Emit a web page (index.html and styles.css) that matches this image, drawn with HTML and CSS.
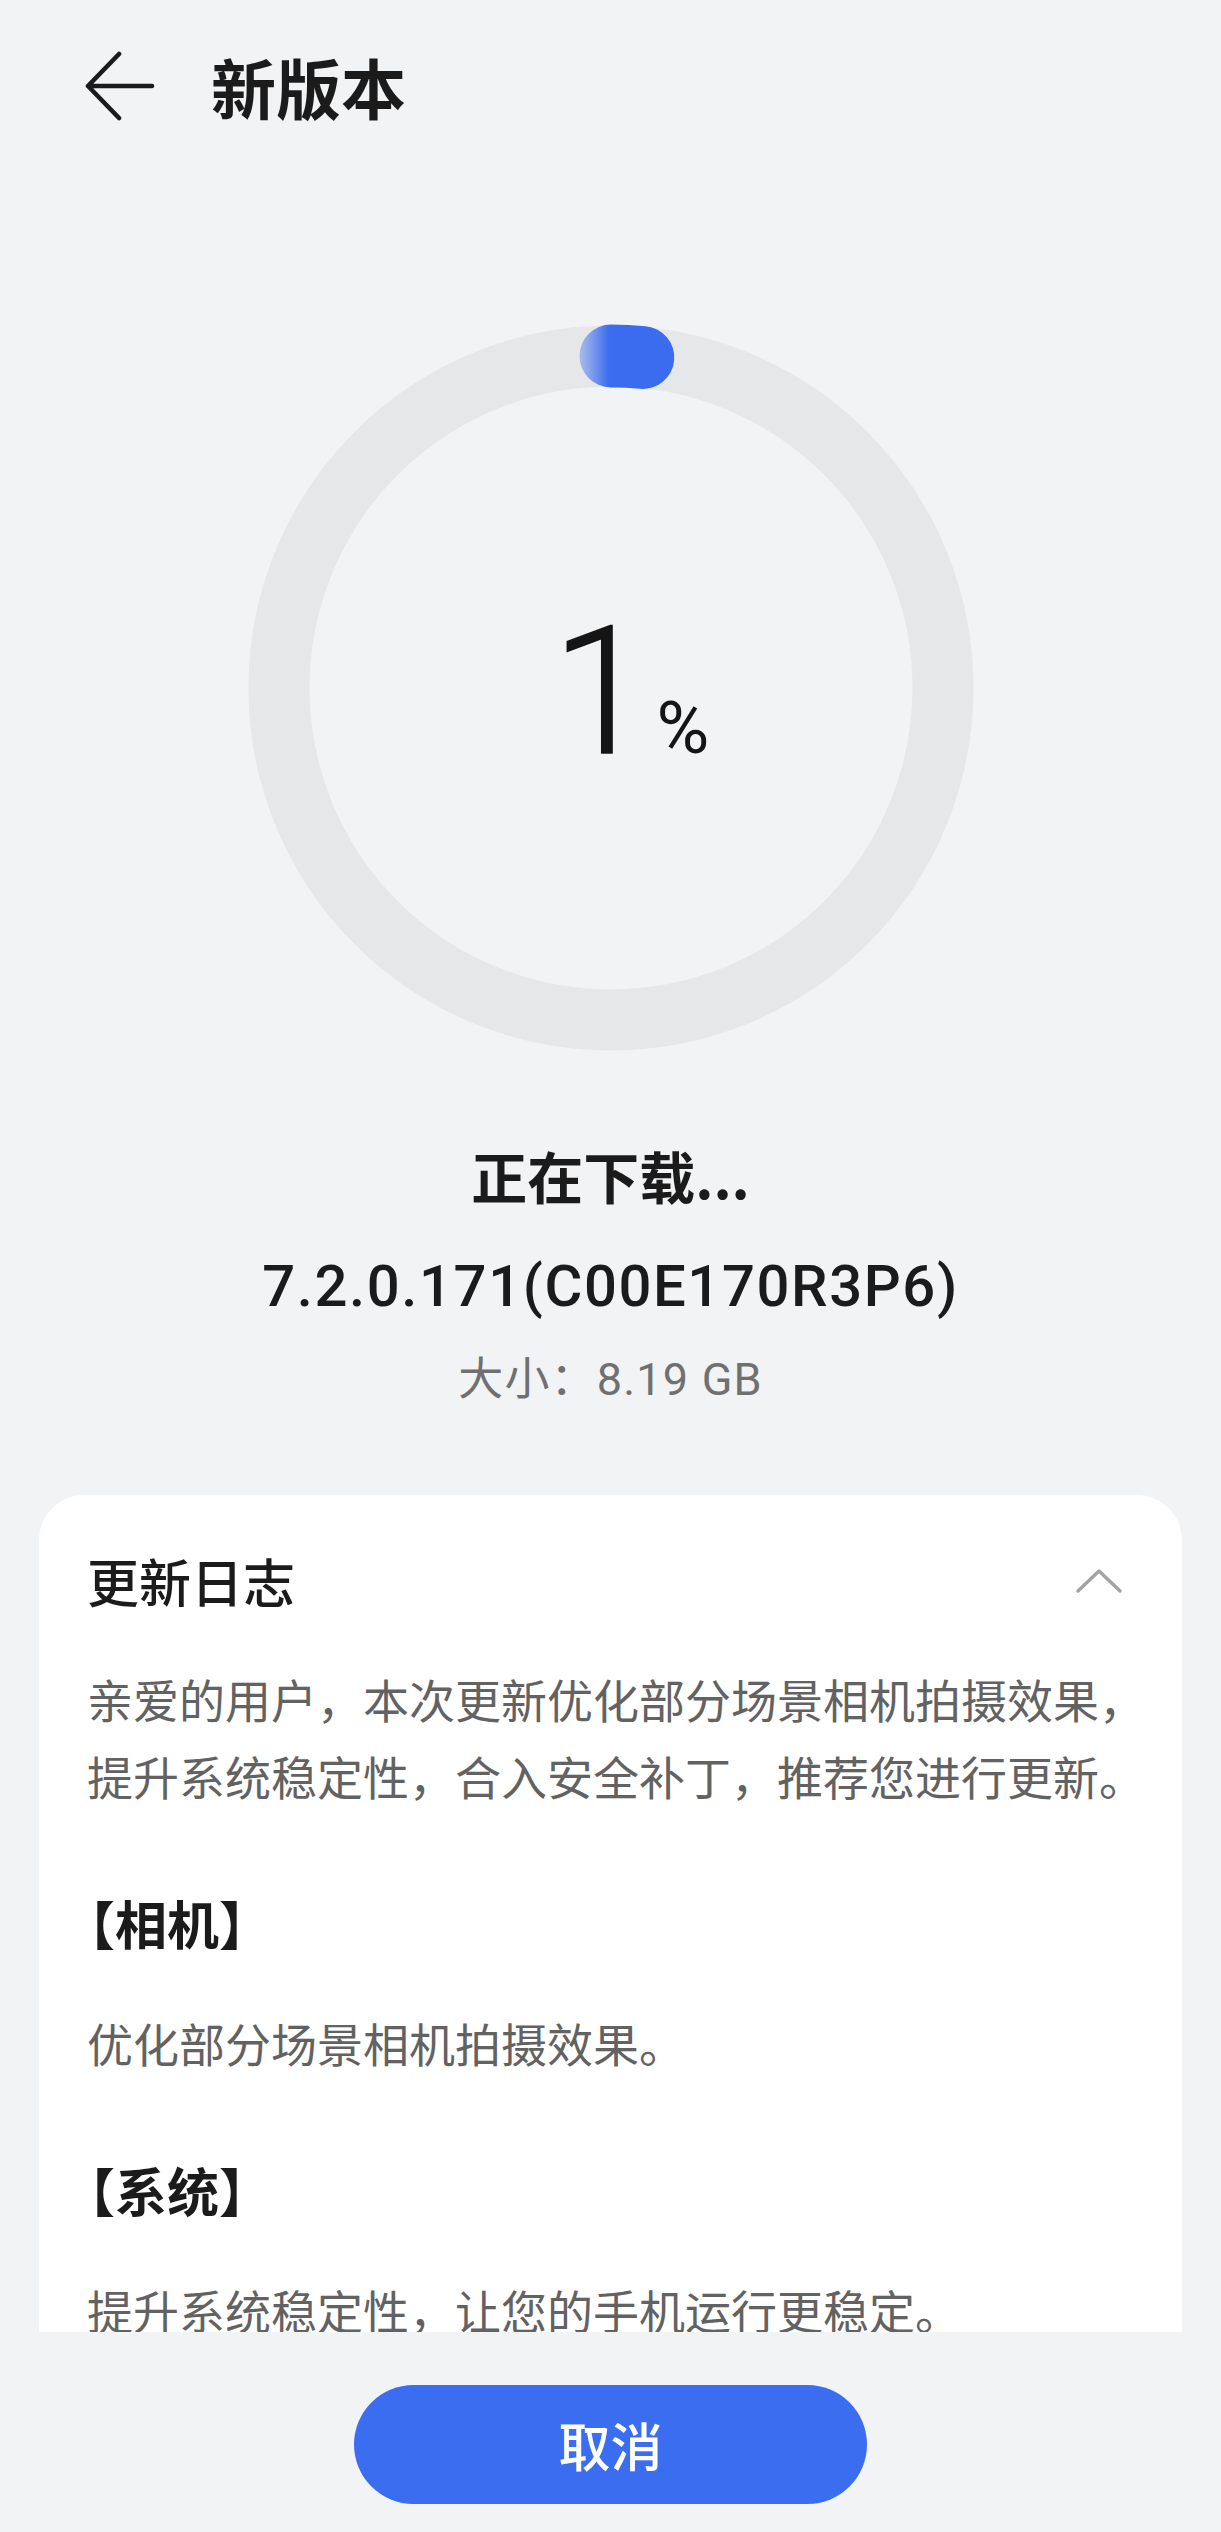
FILE: index.html
```html
<!DOCTYPE html>
<html lang="zh-CN">
<head>
<meta charset="utf-8">
<title>新版本</title>
<link rel="stylesheet" href="styles.css">
</head>
<body>
<div class="page">
  <header class="topbar">
    <svg class="back" width="70" height="70" viewBox="0 0 70 70" aria-hidden="true">
      <path d="M34 3 L3 35 L34 67 M3 35 H67" fill="none" stroke="#1b1b1b" stroke-width="4.6" stroke-linecap="round" stroke-linejoin="round"/>
    </svg>
    <h1 class="title">新版本</h1>
  </header>

  <section class="progress">
    <div class="ring">
      <svg width="740" height="740" viewBox="0 0 740 740" aria-hidden="true">
        <defs>
          <linearGradient id="capg" gradientUnits="userSpaceOnUse" x1="339" y1="0" x2="368" y2="0">
            <stop offset="0" stop-color="#a7bbea"/>
            <stop offset="0.55" stop-color="#6f92ee"/>
            <stop offset="1" stop-color="#3b6cf0"/>
          </linearGradient>
        </defs>
        <circle cx="370" cy="370" r="332" fill="none" stroke="#e6e7e9" stroke-width="61"/>
        <path d="M370 38 A332 332 0 0 1 401.8 39.5" fill="none" stroke="url(#capg)" stroke-width="63" stroke-linecap="round"/>
      </svg>
      <div class="percent"><span class="num">1</span><span class="sign">%</span></div>
    </div>
    <div class="status">正在下载...</div>
    <div class="version">7.2.0.171(C00E170R3P6)</div>
    <div class="size">大小：8.19 GB</div>
  </section>

  <section class="card">
    <div class="card-head">
      <h2 class="card-title">更新日志</h2>
      <svg class="chev" width="48" height="26" viewBox="0 0 48 26" aria-hidden="true">
        <path d="M3 23 L24 3 L45 23" fill="none" stroke="#a3a3a3" stroke-width="3.4" stroke-linecap="round" stroke-linejoin="round"/>
      </svg>
    </div>
    <p class="note intro">亲爱的用户，本次更新优化部分场景相机拍摄效果，提升系统稳定性，合入安全补丁，推荐您进行更新。</p>
    <h3 class="sec"><span class="lb">【</span>相机】</h3>
    <p class="note">优化部分场景相机拍摄效果。</p>
    <h3 class="sec"><span class="lb">【</span>系统】</h3>
    <p class="note">提升系统稳定性，让您的手机运行更稳定。</p>
  </section>

  <div class="actions">
    <button class="cancel" type="button">取消</button>
  </div>
</div>
</body>
</html>
```

FILE: styles.css
```css
* { box-sizing: border-box; }

html, body {
  margin: 0;
  padding: 0;
  background: #f1f3f5;
}

body {
  font-family: "Noto Sans CJK SC", "Noto Sans", sans-serif;
  color: #1b1b1b;
}

.page {
  width: 1221px;
  min-height: 2532px;
  display: flex;
  flex-direction: column;
}

.topbar {
  height: 172px;
  display: flex;
  align-items: center;
  padding-left: 85px;
}

.back { display: block; flex: none; }

.title {
  margin: 0 0 0 56px;
  font-size: 65px;
  line-height: 84px;
  font-weight: 700;
  color: #1b1b1b;
}

.progress {
  display: flex;
  flex-direction: column;
  align-items: center;
}

.ring {
  position: relative;
  width: 740px;
  height: 740px;
  margin-top: 146px;
}

.ring svg { display: block; }

.percent {
  position: absolute;
  left: 0;
  right: 0;
  top: 285px;
  display: flex;
  justify-content: center;
  align-items: baseline;
  font-family: "Roboto", "Noto Sans", sans-serif;
  color: #151515;
  line-height: 1;
  padding-left: 40px;
}

.num {
  font-size: 178px;
  font-weight: 300;
  -webkit-text-stroke: 1.5px #151515;
}

.sign {
  font-size: 72px;
  font-weight: 400;
  margin-left: 6px;
}

.status {
  margin-top: 80px;
  font-size: 56px;
  line-height: 74px;
  font-weight: 700;
  color: #1b1b1b;
}

.version {
  margin-top: 37px;
  font-family: "Roboto", "Noto Sans CJK SC", sans-serif;
  font-size: 58px;
  line-height: 74px;
  font-weight: 500;
  letter-spacing: 1.6px;
  color: #1b1b1b;
}

.size {
  margin-top: 27px;
  font-family: "Roboto", "Noto Sans CJK SC", sans-serif;
  font-size: 45px;
  line-height: 60px;
  letter-spacing: 1.2px;
  color: #707070;
}

.card {
  margin: 85px 39px 0 39px;
  height: 837px;
  overflow: hidden;
  background: #ffffff;
  border-radius: 45px 45px 0 0;
  padding: 51px 28px 0 48px;
}

.card-head {
  display: flex;
  align-items: center;
  justify-content: space-between;
  padding-right: 31px;
  margin-bottom: 44px;
}

.card-title {
  margin: 0;
  font-size: 52px;
  line-height: 70px;
  font-weight: 500;
  color: #1b1b1b;
}

.chev { display: block; flex: none; }

.note {
  margin: 0;
  font-size: 46px;
  line-height: 77px;
  color: #626262;
}

.sec {
  margin: 74px 0 0 0;
  font-size: 52px;
  line-height: 70px;
  font-weight: 700;
  color: #1b1b1b;
}

.lb {
  margin-left: -0.46em;
}

.sec + .note { margin-top: 46px; }

.actions {
  display: flex;
  justify-content: center;
  margin-top: 53px;
}

.cancel {
  width: 513px;
  height: 119px;
  border: none;
  border-radius: 60px;
  background: #3b6df1;
  color: #ffffff;
  font-family: "Noto Sans CJK SC", sans-serif;
  font-size: 52px;
  font-weight: 500;
  padding: 0;
  cursor: pointer;
}
```
